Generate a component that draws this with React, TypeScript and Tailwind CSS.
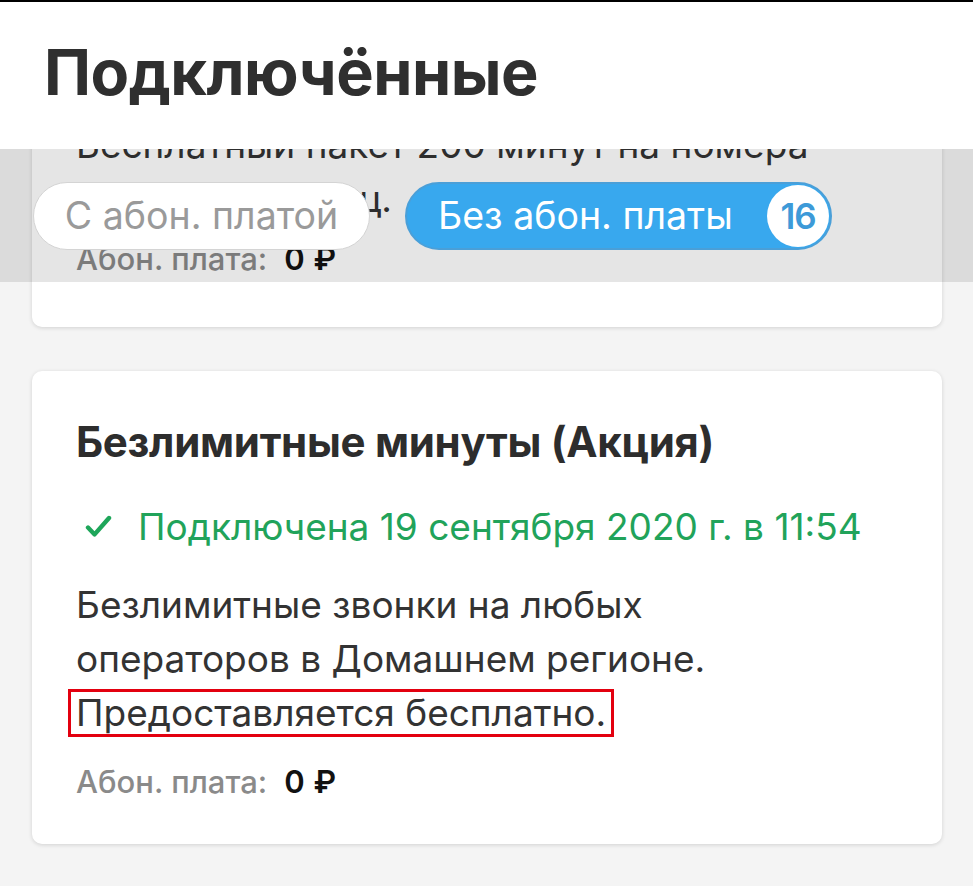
import React from "react";

const font = { fontFamily: "Inter, Roboto, 'Noto Sans', sans-serif" };

function Check() {
  return (
    <svg width="27" height="24" viewBox="0 0 27 24" className="shrink-0">
      <path d="M3 12.5 L9.6 19.4 L24 3" fill="none" stroke="#1ea65a" strokeWidth="4.4" strokeLinecap="round" strokeLinejoin="round" />
    </svg>
  );
}

function Fee() {
  return (
    <div className="text-[31px] leading-[40px] font-medium flex">
      <span className="text-[#8a8a8a]">Абон. плата:</span>
      <span className="ml-[17px] text-[#111] font-semibold tracking-[0.5px]">0 ₽</span>
    </div>
  );
}

export default function App() {
  return (
    <div className="relative w-[973px] h-[886px] overflow-hidden bg-[#f4f4f4]" style={font}>
      {/* content */}
      <div className="flex flex-col gap-[44px] px-[32px] pr-[31px] pt-[60px]">
        <div className="bg-white rounded-[10px] shadow-[0_1px_4px_rgba(0,0,0,0.14)] px-[44px] pt-[58px] h-[267px]">
          <p className="text-[37px] leading-[54px] text-[#333]">
            Бесплатный пакет 200 минут на номера
            <br />
            России за месяц.
          </p>
          <div className="mt-[13px]">
            <Fee />
          </div>
        </div>

        <div className="bg-white rounded-[10px] shadow-[0_1px_4px_rgba(0,0,0,0.14)] px-[44px] pt-[43px] pb-[42px]">
          <h2 className="text-[42px] leading-[56px] font-bold text-[#2d2d2d] tracking-[-0.3px]">Безлимитные минуты (Акция)</h2>
          <div className="mt-[33px] flex items-center gap-[26px] pl-[9px] text-[37px] leading-[48px] text-[#21a35a]">
            <Check />
            <span>Подключена 19 сентября 2020 г. в 11:54</span>
          </div>
          <p className="mt-[27px] text-[37px] leading-[54px] text-[#333]">
            Безлимитные звонки на любых
            <br />
            операторов в Домашнем регионе.
            <br />
            <span className="inline-block -ml-[8px] px-[5px] border-[3px] border-[#e3000f] leading-[42px]">
              Предоставляется бесплатно.
            </span>
          </p>
          <div className="mt-[22px]">
            <Fee />
          </div>
        </div>
      </div>

      {/* sticky header */}
      <div className="absolute top-0 left-0 right-0 h-[149px] bg-white border-t-2 border-black">
        <h1 className="pl-[44px] pt-[30px] text-[63px] leading-[80px] font-bold text-[#2f2f2f] tracking-[-0.5px]">Подключённые</h1>
      </div>

      {/* filter band */}
      <div className="absolute top-[149px] left-0 right-0 h-[133px] bg-black/10">
        <div className="flex items-center gap-[35px] pl-[33px] pt-[33px]">
          <div className="h-[68px] w-[337px] rounded-full bg-white border border-[#d4d4d4] flex items-center justify-center text-[37.5px] text-[#9a9a9a]">
            С абон. платой
          </div>
          <div className="h-[68px] w-[427px] rounded-full bg-[#38a8ee] border-2 border-[#4a9fd8] flex items-center pl-[31px] pr-[1px] text-[37.5px] text-white">
            <span className="flex-1">Без абон. платы</span>
            <span className="w-[62px] h-[62px] rounded-full bg-white text-[#3d9ad8] font-semibold flex items-center justify-center text-[35px] tracking-[-1px]">16</span>
          </div>
        </div>
      </div>
    </div>
  );
}
